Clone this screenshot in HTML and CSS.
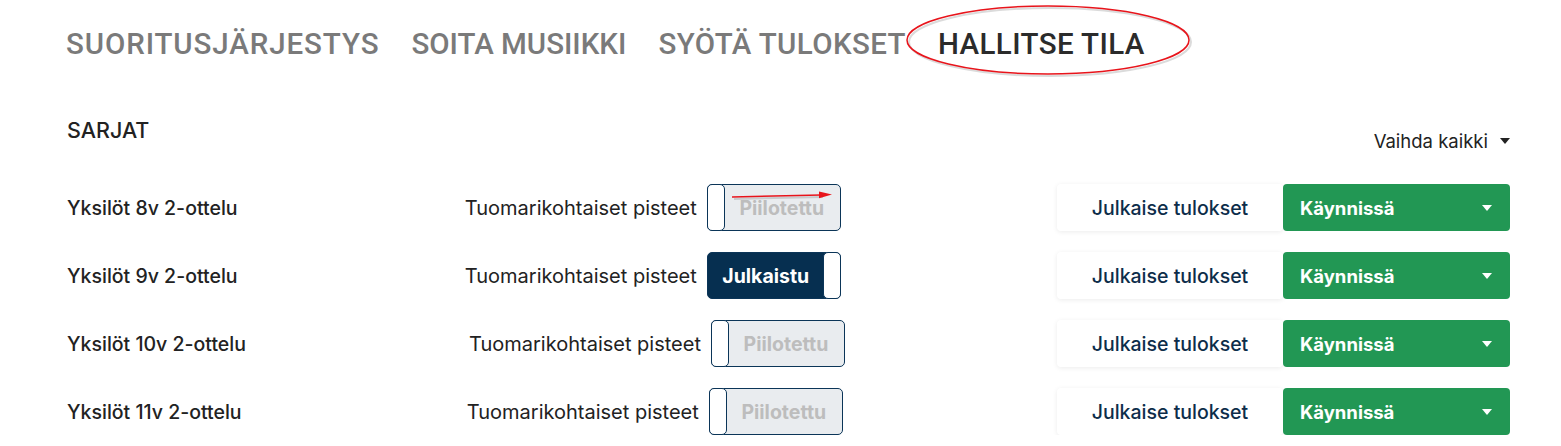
FILE: index.html
```html
<!DOCTYPE html>
<html>
<head>
  <link rel="stylesheet" href="styles.css">
</head>
<body>

  <div class="page">
    <nav class="tabs">
      <a class="tab">SUORITUSJÄRJESTYS</a>
      <a class="tab">SOITA MUSIIKKI</a>
      <a class="tab">SYÖTÄ TULOKSET</a>
      <a class="tab active">HALLITSE TILA
        <svg class="circle-mark" width="290" height="76" viewBox="0 0 290 76">
          <ellipse cx="143" cy="37" rx="141" ry="34" fill="none" stroke="#999" stroke-opacity="0.35" stroke-width="2" transform="translate(2 2)"/>
          <ellipse cx="143" cy="37" rx="141" ry="34" fill="none" stroke="#e8141b" stroke-width="1.5"/>
        </svg>
      </a>
    </nav>

    <section class="series">
      <h3 class="series-title">SARJAT</h3>

      <div class="toolbar">
        <button class="toggle-all">Vaihda kaikki <span class="caret dark"></span></button>
      </div>

      <div class="row">
        <div class="name">Yksilöt 8v 2-ottelu</div>
        <div class="scores">
          <span class="scores-label">Tuomarikohtaiset pisteet</span>
          <button class="switch">
            <span class="knob"></span>
            <span class="switch-text">Piilotettu</span>
            <svg class="arrow-mark" width="110" height="14" viewBox="0 0 110 14">
              <line x1="3" y1="11" x2="92" y2="9" stroke="#999" stroke-opacity="0.4" stroke-width="2"/>
              <line x1="1" y1="9" x2="90" y2="7" stroke="#e8141b" stroke-width="1.5"/>
              <polygon points="88,3.5 101,6.6 88,10.2" fill="#e8141b"/>
            </svg>
          </button>
        </div>
        <div class="actions">
          <button class="publish">Julkaise tulokset</button>
          <button class="status">Käynnissä <span class="caret"></span></button>
        </div>
      </div>

      <div class="row">
        <div class="name">Yksilöt 9v 2-ottelu</div>
        <div class="scores">
          <span class="scores-label">Tuomarikohtaiset pisteet</span>
          <button class="switch on">
            <span class="switch-text">Julkaistu</span>
            <span class="knob"></span>
          </button>
        </div>
        <div class="actions">
          <button class="publish">Julkaise tulokset</button>
          <button class="status">Käynnissä <span class="caret"></span></button>
        </div>
      </div>

      <div class="row">
        <div class="name">Yksilöt 10v 2-ottelu</div>
        <div class="scores">
          <span class="scores-label">Tuomarikohtaiset pisteet</span>
          <button class="switch">
            <span class="knob"></span>
            <span class="switch-text">Piilotettu</span>
          </button>
        </div>
        <div class="actions">
          <button class="publish">Julkaise tulokset</button>
          <button class="status">Käynnissä <span class="caret"></span></button>
        </div>
      </div>

      <div class="row">
        <div class="name">Yksilöt 11v 2-ottelu</div>
        <div class="scores">
          <span class="scores-label">Tuomarikohtaiset pisteet</span>
          <button class="switch">
            <span class="knob"></span>
            <span class="switch-text">Piilotettu</span>
          </button>
        </div>
        <div class="actions">
          <button class="publish">Julkaise tulokset</button>
          <button class="status">Käynnissä <span class="caret"></span></button>
        </div>
      </div>
    </section>
  </div>

</body>
</html>
```

FILE: styles.css
```css
body {
  margin: 0;
  background: #ffffff;
  font-family: Inter, 'Noto Sans', sans-serif;
  color: #222;
}

.page {
  padding: 0 51px 0 66px;
}

.tabs {
  display: flex;
  gap: 32px;
  padding-top: 27px;
  height: 70px;
  box-sizing: border-box;
}

.tab {
  position: relative;
  font-family: Roboto, sans-serif;
  font-weight: 500;
  font-size: 29.5px;
  line-height: 34px;
  color: #7a7a7a;
}

.tab:nth-child(1) {
  letter-spacing: 0.9px;
}

.tab:nth-child(3),
.tab:nth-child(4) {
  letter-spacing: 0.4px;
}

.tab.active {
  color: #2b2b2b;
}

.circle-mark {
  position: absolute;
  left: -33px;
  top: -24px;
  pointer-events: none;
}

.series-title {
  margin: 48px 0 0 1px;
  font-size: 21.5px;
  font-weight: 500;
  line-height: 24px;
  color: #222;
}

.toolbar {
  display: flex;
  justify-content: flex-end;
  margin-top: -12px;
}

.toggle-all {
  display: flex;
  align-items: center;
  gap: 12px;
  background: none;
  border: none;
  padding: 0;
  font-family: inherit;
  font-size: 18.5px;
  color: #222;
}

.caret {
  display: inline-block;
  width: 0;
  height: 0;
  border-left: 5.5px solid transparent;
  border-right: 5.5px solid transparent;
  border-top: 6px solid #ffffff;
}

.caret.dark {
  border-top-color: #222;
}

.row {
  display: flex;
  align-items: center;
  justify-content: space-between;
  height: 47px;
  margin-top: 21px;
  padding-left: 1px;
}

.toolbar + .row {
  margin-top: 32px;
}

.name {
  font-size: 19.5px;
  font-weight: 500;
  color: #222;
}

.scores {
  display: flex;
  align-items: center;
  gap: 10px;
  margin-left: 11px;
}

.scores-label {
  font-size: 20px;
  color: #222;
}

.switch {
  position: relative;
  display: flex;
  align-items: stretch;
  width: 134px;
  height: 47px;
  padding: 0;
  background: #e9ecef;
  border: 1px solid #0b3558;
  border-radius: 5px;
  font-family: inherit;
}

.switch.on {
  background: #062f50;
}

.knob {
  width: 16px;
  background: #ffffff;
  border: 1px solid #0b3558;
  border-radius: 5px;
  margin: -1px;
}

.switch-text {
  flex: 1;
  display: flex;
  align-items: center;
  justify-content: center;
  font-size: 19.5px;
  font-weight: 700;
  color: #bdbdbd;
}

.switch.on .switch-text {
  color: #ffffff;
}

.arrow-mark {
  position: absolute;
  left: 23px;
  top: 3px;
}

.actions {
  display: flex;
  height: 47px;
}

.publish {
  width: 226px;
  background: #ffffff;
  border: none;
  border-radius: 4px;
  box-shadow: 0 1px 5px rgba(0, 0, 0, 0.08);
  font-family: inherit;
  font-size: 19.5px;
  font-weight: 500;
  color: #0d2d4a;
}

.status {
  display: flex;
  align-items: center;
  justify-content: space-between;
  width: 227px;
  padding: 0 18px 0 17px;
  background: #229754;
  border: none;
  border-radius: 4px;
  font-family: inherit;
  font-size: 18.5px;
  font-weight: 700;
  color: #ffffff;
}
```
